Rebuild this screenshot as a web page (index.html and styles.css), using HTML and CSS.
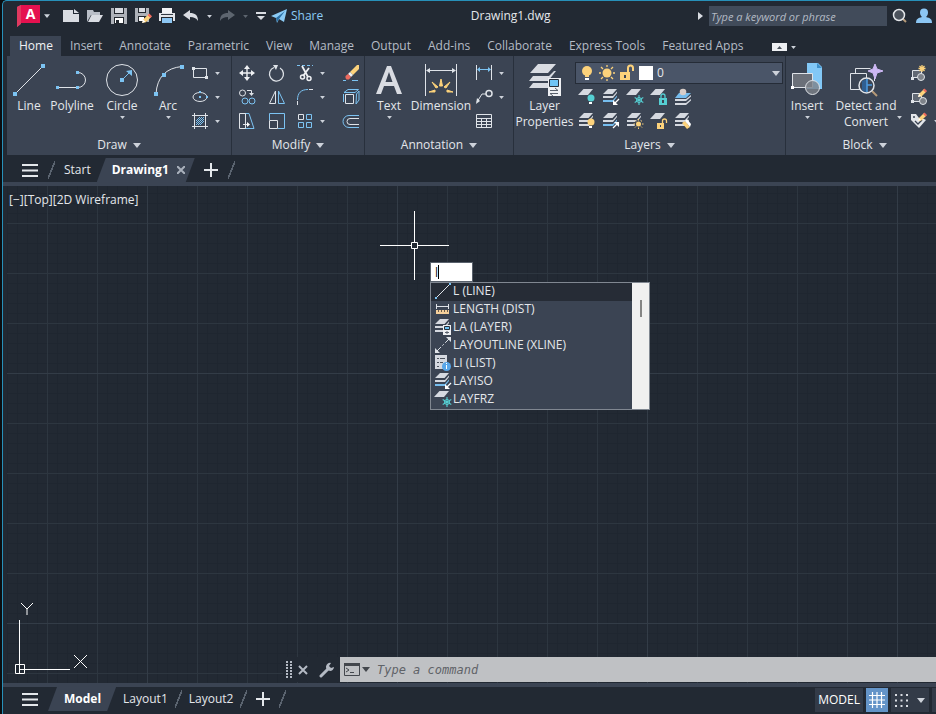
FILE: index.html
```html
<!DOCTYPE html>
<html lang="en">
<head>
    <meta charset="UTF-8">
    <meta name="viewport" content="width=device-width, initial-scale=1.0">
    <title>Drawing1.dwg</title>
    <link rel="stylesheet" href="styles.css">
</head>
<body>

    <!-- shared icon parts -->
    <svg class="sprite" aria-hidden="true">
        <symbol id="caret" viewBox="0 0 8 5"><path d="M0 0h8L4 5z" fill="currentColor"/></symbol>
        <symbol id="sheet" viewBox="0 0 18 18"><path d="M5.500 1H15l-5 6H0z" fill="#d5d9e0"/></symbol>
        <symbol id="stack" viewBox="0 0 18 18">
            <path d="M6 1h9l-4.500 5H1zM1 8h10l4-4.500V5l-4 5H1zM1 12h10l4-4.500V9l-4 5H1z" fill="#d5d9e0"/>
        </symbol>
        <symbol id="stack-blue" viewBox="0 0 18 18">
            <path d="M6 1h9l-4.500 5H1zM1 8h10l4-4.500V5l-4 5H1z" fill="#d5d9e0"/>
            <path d="M1 12h10l4-4.500V9l-4 5H1z" fill="#76bdee"/>
        </symbol>
        <symbol id="pencil" viewBox="0 0 10 10">
            <path d="M1 9l1-3 5-5 2.500 2.500-5 5z" fill="#fcd27b"/>
            <path d="M6 2l1.500-1.500L10 3 8.500 4.500z" fill="#ed6a5e"/>
            <path d="M1 9l1-3 2 2z" fill="#fff"/>
        </symbol>
        <symbol id="snow" viewBox="0 0 10 10">
            <path d="M5 0v10M.7 2.500l8.600 5M9.300 2.500l-8.600 5" stroke="#55cfd3" stroke-width="1.100"/>
            <path d="M5 2.200l2.500 1.400v2.800L5 7.800 2.500 6.400V3.600z" fill="none" stroke="#55cfd3" stroke-width=".9"/>
        </symbol>
        <symbol id="plus" viewBox="0 0 14 14"><path d="M7 0v14M0 7h14" stroke="currentColor" stroke-width="2"/></symbol>
        <symbol id="menu" viewBox="0 0 16 13"><path d="M0 1h16M0 6.500h16M0 12h16" stroke="currentColor" stroke-width="2"/></symbol>
    </svg>

    <div class="window">

        <header class="titlebar">
            <button class="app-button" aria-label="Application menu">
                <svg width="23" height="23" viewBox="0 0 23 23"><path d="M0 2l4-2v19l-4 3z" fill="#c95070"/><path d="M0 2l4-2h18v18H4l-4 4z" fill="#e0385f"/><path d="M4 0h19v18H4z" fill="#e5114f"/><text x="13.500" y="14" text-anchor="middle" class="logo-letter">A</text></svg>
                <svg class="caret"><use href="#caret"/></svg>
            </button>
            <nav class="quick">
                <button aria-label="New"><svg width="18" height="18" viewBox="0 0 18 18"><path d="M1 3h10v4h6v8H1z" fill="#d9dce2"/><path d="M12 2l5 4h-5z" fill="#d9dce2"/></svg></button>
                <button aria-label="Open"><svg width="18" height="18" viewBox="0 0 18 18"><path d="M1 15V3h6l1 2h6v3H5z" fill="#b9bec7"/><path d="M5.500 8H17l-4 7H2z" fill="#d9dce2"/></svg></button>
                <button aria-label="Save"><svg width="18" height="18" viewBox="0 0 18 18"><path d="M1 1h16v16H1z" fill="#aeb2b9"/><path d="M4 1h10v6H4z" fill="#23282f"/><path d="M5 1h8v5H5z" fill="#d9dce2"/><path d="M4 10h10v7H4z" fill="#23282f"/><path d="M5 11h8v5H5z" fill="#fff"/><path d="M6 13h3v3H6z" fill="#23282f"/></svg></button>
                <button aria-label="Save As"><svg width="18" height="18" viewBox="0 0 18 18"><path d="M1 1h14v14H1z" fill="#aeb2b9"/><path d="M4 1h8v5H4z" fill="#23282f"/><path d="M5 1h6v4H5z" fill="#d9dce2"/><path d="M4 9h9v6H4z" fill="#23282f"/><path d="M5 10h5v4H5z" fill="#fff"/><use href="#pencil" x="7" y="6" width="11" height="11"/></svg></button>
                <button aria-label="Plot"><svg width="18" height="18" viewBox="0 0 18 18"><path d="M4 1h10v5H4z" fill="#f2f3f5"/><path d="M1 6h16v8H1z" fill="#e3e5e9"/><path d="M3 7h12v1H3z" fill="#333a44"/><path d="M3 10h12v7H3z" fill="#23282f"/><path d="M4 11h10v5H4z" fill="#8cc6f3"/></svg></button>
                <button aria-label="Undo"><svg width="18" height="18" viewBox="0 0 18 18"><path d="M1 8l7-5v3c5 0 8 2 8 8-2-3-4-4-8-4v3z" fill="#d9dce2"/></svg></button>
                <button class="narrow" aria-label="Undo list"><svg class="caret small"><use href="#caret"/></svg></button>
                <button class="off" aria-label="Redo"><svg width="18" height="18" viewBox="0 0 18 18"><path d="M17 8l-7-5v3c-5 0-8 2-8 8 2-3 4-4 8-4v3z" fill="#5d656f"/></svg></button>
                <button class="narrow off" aria-label="Redo list"><svg class="caret small"><use href="#caret"/></svg></button>
                <button class="customize" aria-label="Customize toolbar"><svg width="10" height="8" viewBox="0 0 10 8"><path d="M0 0h10v2H0zM1 4h8L5 8z" fill="#d9dce2"/></svg></button>
            </nav>
            <button class="share"><svg width="16" height="16" viewBox="0 0 16 16"><path d="M0 8L16 1l-3 13-5-3-2 4-1-5z" fill="#8bcbf5"/><path d="M5 10l9-7-6 8-2 3z" fill="#2a6fa5"/></svg>Share</button>
            <div class="doc-title">Drawing1.dwg</div>
            <svg class="play" width="5" height="8" viewBox="0 0 5 8"><path d="M0 0l5 4-5 4z" fill="#d9dce2"/></svg>
            <input class="search" type="text" placeholder="Type a keyword or phrase" aria-label="Search">
            <button class="round" aria-label="Search"><svg width="16" height="16" viewBox="0 0 16 16"><path d="M10 10l4 4" stroke="#b69a78" stroke-width="2"/><circle cx="7" cy="7" r="5.500" fill="#4b525c" stroke="#e3e6ea" stroke-width="1.500"/></svg></button>
            <button class="round" aria-label="Sign in"><svg width="16" height="16" viewBox="0 0 16 16"><path d="M4 4.500a4 4 0 0 1 8 0C12 7 11 8 10 9c4 1 6 2 6 6H0c0-4 2-5 6-6-1-1-2-2-2-4.500z" fill="#8cc6f3"/></svg></button>
        </header>

        <nav class="tabs">
            <button class="active">Home</button>
            <button>Insert</button>
            <button>Annotate</button>
            <button>Parametric</button>
            <button>View</button>
            <button>Manage</button>
            <button>Output</button>
            <button>Add-ins</button>
            <button>Collaborate</button>
            <button>Express Tools</button>
            <button>Featured Apps</button>
            <button class="minimize" aria-label="Minimize ribbon"><svg width="15" height="8" viewBox="0 0 15 8"><path d="M0 0h15v8H0z" fill="#eef0f3"/><path d="M5 6l2.500-3L10 6z" fill="#4b525c"/></svg><svg class="caret small"><use href="#caret"/></svg></button>
        </nav>

        <div class="ribbon">

            <section class="panel draw">
                <div class="tools">
                    <button class="big"><svg width="32" height="34" viewBox="0 0 32 34"><path d="M2 31L30 3" stroke="#dfe3e8"/><path d="M0 29h4v4H0zM28 1h4v4h-4z" fill="#7cc3f2"/></svg>Line</button>
                    <button class="big"><svg width="34" height="34" viewBox="0 0 34 34"><path d="M3 24.500h20a7.500 7.500 0 0 0 0-15" fill="none" stroke="#dfe3e8"/><path d="M1 23h3v3H1zM21 23h3v3h-3zM21 8h3v3h-3z" fill="#7cc3f2"/></svg>Polyline</button>
                    <button class="big"><svg width="34" height="34" viewBox="0 0 34 34"><circle cx="17" cy="17" r="15.500" fill="none" stroke="#dfe3e8"/><path d="M17 17l8-8" stroke="#7cc3f2"/><path d="M15 15h4v4h-4zM27 7v6l-6-5z" fill="#7cc3f2"/></svg>Circle<svg class="caret small"><use href="#caret"/></svg></button>
                    <button class="big"><svg width="34" height="34" viewBox="0 0 34 34"><path d="M5 31C6 14 15 5 31 3.500" fill="none" stroke="#dfe3e8"/><path d="M3 29h4v4H3zM11 10h4v4h-4zM29 2h4v4h-4z" fill="#7cc3f2"/></svg>Arc<svg class="caret small"><use href="#caret"/></svg></button>
                    <div class="column">
                        <button class="mini" aria-label="Rectangle"><svg class="icon" viewBox="0 0 18 18"><path d="M2.500 4.500h13v9h-13z" fill="none" stroke="#dfe3e8"/><path d="M1 3h3v3H1zM14 12h3v3h-3z" fill="#dfe3e8"/></svg><svg class="caret small"><use href="#caret"/></svg></button>
                        <button class="mini" aria-label="Ellipse"><svg class="icon" viewBox="0 0 18 18"><ellipse cx="9" cy="9" rx="7" ry="4.500" fill="none" stroke="#dfe3e8"/><path d="M8 8h2v2H8zM15 8h2v2h-2zM8 3h2v2H8z" fill="#7cc3f2"/></svg><svg class="caret small"><use href="#caret"/></svg></button>
                        <button class="mini" aria-label="Hatch"><svg class="icon" viewBox="0 0 18 18"><path d="M5 9l4-4M5 13l8-8M9 13l4-4M5 11l6-6M7 13l6-6" stroke="#7cc3f2"/><path d="M1 3.500h16M1 14.500h16M3.500 1v16M14.500 1v16" stroke="#dfe3e8"/></svg><svg class="caret small"><use href="#caret"/></svg></button>
                    </div>
                </div>
                <button class="panel-title">Draw<svg class="caret"><use href="#caret"/></svg></button>
            </section>

            <section class="panel modify">
                <div class="tools">
                    <div class="column">
                        <button class="mini" aria-label="Move"><svg class="icon" viewBox="0 0 18 18"><path d="M9 3v12M3 9h12" stroke="#eef0f3" stroke-width="1.400"/><path d="M9 1l3 4H6zM9 17l3-4H6zM1 9l4-3v6zM17 9l-4-3v6z" fill="#eef0f3"/></svg></button>
                        <button class="mini" aria-label="Copy"><svg class="icon" viewBox="0 0 18 18"><g fill="none"><circle cx="4.500" cy="5" r="3" stroke="#dfe3e8"/><circle cx="7" cy="13" r="3" stroke="#7cc3f2"/><circle cx="14" cy="13" r="3" stroke="#7cc3f2"/><path d="M9 2.500h4.500v4" stroke="#dfe3e8"/></g><path d="M11 5h5l-2.500 3z" fill="#dfe3e8"/></svg></button>
                        <button class="mini" aria-label="Stretch"><svg class="icon" viewBox="0 0 18 18"><path d="M7 1.500h4l5 15H7" fill="none" stroke="#7cc3f2"/><path d="M1.500 1.500h6v15h-6zM5 12.500h5" fill="none" stroke="#dfe3e8"/><path d="M9 10l3 2.500L9 15z" fill="#fff"/></svg></button>
                    </div>
                    <div class="column">
                        <button class="mini" aria-label="Rotate"><svg class="icon" viewBox="0 0 18 18"><path d="M12 4a7 7 0 1 1-6-.5" fill="none" stroke="#dfe3e8" stroke-width="1.300"/><path d="M5 1h5L8 6z" fill="#dfe3e8"/></svg></button>
                        <button class="mini" aria-label="Mirror"><svg class="icon" viewBox="0 0 18 18"><path d="M7.500 3v12.500H1.500z" fill="none" stroke="#dfe3e8"/><path d="M10.500 3v12.500h6z" fill="none" stroke="#7cc3f2"/></svg></button>
                        <button class="mini" aria-label="Scale"><svg class="icon" viewBox="0 0 18 18"><path d="M1.500 8V1.500h15v15H10" fill="none" stroke="#7cc3f2"/><path d="M1.500 8.500h8v8h-8z" fill="none" stroke="#dfe3e8"/></svg></button>
                    </div>
                    <div class="column">
                        <button class="mini" aria-label="Trim"><svg class="icon" viewBox="0 0 18 18"><path d="M1 1.500h16" stroke="#7cc3f2" stroke-dasharray="3 2"/><path d="M6 2l6 11M13 4L7 12" stroke="#eef0f3" stroke-width="1.800"/><g fill="none" stroke="#eef0f3" stroke-width="1.500"><circle cx="6.500" cy="13" r="2"/><circle cx="13" cy="14.500" r="2"/></g></svg><svg class="caret small"><use href="#caret"/></svg></button>
                        <button class="mini" aria-label="Fillet"><svg class="icon" viewBox="0 0 18 18"><path d="M1.500 17v-4M13 1.500h4" stroke="#dfe3e8"/><path d="M1.500 12C1.500 5 5 1.500 12 1.500" fill="none" stroke="#7cc3f2"/></svg><svg class="caret small"><use href="#caret"/></svg></button>
                        <button class="mini" aria-label="Array"><svg class="icon" viewBox="0 0 18 18"><g fill="none" stroke="#7cc3f2"><path d="M10.500 2.500h5v5h-5zM2.500 10.500h5v5h-5zM10.500 10.500h5v5h-5z"/><path d="M2.500 2.500h5v5h-5z" stroke="#dfe3e8"/></g></svg><svg class="caret small"><use href="#caret"/></svg></button>
                    </div>
                    <div class="column">
                        <button class="mini" aria-label="Erase"><svg class="icon" viewBox="0 0 18 18"><path d="M8 8l7-7h2v4l-6 6z" fill="#fcd27b"/><path d="M6 10l2-2 3 3-2 2z" fill="#eef0f3"/><path d="M6 10l3 3-2 2.500H4.500L3.500 14v-2z" fill="#ed6a5e"/><path d="M1 16.500h3M10 16.500h6" stroke="#7cc3f2"/></svg></button>
                        <button class="mini" aria-label="Explode"><svg class="icon" viewBox="0 0 18 18"><g fill="none"><path d="M3.500 6.500h8v9h-8z" stroke="#dfe3e8"/><path d="M2 4.500L6 1.500h10.500L13 4.500zM14.500 6L17 3v9l-3 4zM1.500 6v8" stroke="#7cc3f2"/></g></svg></button>
                        <button class="mini" aria-label="Offset"><svg class="icon" viewBox="0 0 18 18"><g fill="none"><path d="M17 3.500H7a6 6 0 0 0 0 12h10" stroke="#7cc3f2"/><path d="M17 6.500H8a3 3 0 0 0 0 6h9" stroke="#dfe3e8"/></g></svg></button>
                    </div>
                </div>
                <button class="panel-title">Modify<svg class="caret"><use href="#caret"/></svg></button>
            </section>

            <section class="panel annotation">
                <div class="tools">
                    <button class="big"><svg width="34" height="34" viewBox="0 0 34 34"><path d="M4 31L15 3h4l11 28h-5l-3-8H12l-3 8zM13.500 19h7L17 9z" fill="#d9dce2" fill-rule="evenodd"/></svg>Text<svg class="caret small"><use href="#caret"/></svg></button>
                    <button class="big"><svg width="34" height="34" viewBox="0 0 34 34"><path d="M1.500 1v32M32.500 1v32M3 7.500h28" stroke="#dfe3e8"/><path d="M2 7.500L6 5v5zM32 7.500L28 5v5z" fill="#dfe3e8"/><path d="M5 29l6-2v2zM29 29l-6-2v2zM8 19l6 5-2 1zM26 19l-6 5 2 1zM17 16l1.500 7h-3z" fill="#fcd27b" stroke="#fcd27b"/></svg>Dimension</button>
                    <div class="column">
                        <button class="mini" aria-label="Linear"><svg class="icon" viewBox="0 0 18 18"><path d="M4 5.500h10" stroke="#7cc3f2"/><path d="M2 5.500L5 3v5zM16 5.500L13 3v5z" fill="#7cc3f2"/><path d="M1.500 1v15M16.500 1v15" stroke="#dfe3e8"/></svg><svg class="caret small"><use href="#caret"/></svg></button>
                        <button class="mini" aria-label="Leader"><svg class="icon" viewBox="0 0 18 18"><path d="M2 14l5-8h4" fill="none" stroke="#dfe3e8"/><circle cx="14" cy="5.500" r="3" fill="none" stroke="#dfe3e8" stroke-width="1.500"/><path d="M1 16l1-6 3 3z" fill="#dfe3e8"/></svg><svg class="caret small"><use href="#caret"/></svg></button>
                        <button class="mini" aria-label="Table"><svg class="icon" viewBox="0 0 18 18"><path d="M1.500 2.500h15v13h-15zM1.500 6.500h15M1.500 9.500h15M1.500 12.500h15M6.500 6v9M11.500 6v9" fill="none" stroke="#dfe3e8"/></svg></button>
                    </div>
                </div>
                <button class="panel-title">Annotation<svg class="caret"><use href="#caret"/></svg></button>
            </section>

            <section class="panel layers">
                <div class="tools">
                    <button class="big"><svg width="34" height="34" viewBox="0 0 34 34"><path d="M10 1h18l-8 9H2zM5 13h16l5-5h2l-8 10H1zM5 20h15v5H1z" fill="#d9dce2"/><path d="M20 15h13v18H20z" fill="#eef0f3"/><path d="M21.500 16.500h9v7h-9z" fill="#6fc4f5" stroke="#28303b"/><path d="M22 27.500h8M22 30.500h8M27 25l3 2.500M25 33l-3-2.500" stroke="#59616c" fill="none"/></svg>Layer<br>Properties</button>
                    <div class="layer-tools">
                        <div class="layer-picker">
                            <svg class="icon" viewBox="0 0 18 18"><circle cx="9" cy="7" r="5" fill="#fcd27b"/><path d="M7 11h4v2H7z" fill="#fcd27b"/><path d="M7 14h4v2H7z" fill="#fff"/></svg>
                            <svg class="icon" viewBox="0 0 18 18"><circle cx="9" cy="9" r="4.500" fill="#fcd27b"/><path d="M9 1v2M9 15v2M1 9h2M15 9h2M3 3l2 2M13 13l2 2M3 15l2-2M13 5l2-2" stroke="#fcd27b" stroke-width="1.300"/></svg>
                            <svg class="icon" viewBox="0 0 18 18"><path d="M2 8h10v8H2z" fill="#fcd27b"/><path d="M10 8V4a2.500 2.500 0 0 1 5 0v3" fill="none" stroke="#fcd27b" stroke-width="2"/><path d="M6 11h2v3H6z" fill="#3b4453"/></svg>
                            <span class="swatch"></span>
                            <select aria-label="Layer"><option>0</option></select>
                            <svg class="caret"><use href="#caret"/></svg>
                        </div>
                        <div class="row">
                            <button class="mini" aria-label="Off"><svg class="icon" viewBox="0 0 18 18"><use href="#sheet"/><circle cx="13" cy="10" r="3.500" fill="#55cfd3"/><path d="M11 14h3v2h-3z" fill="#fff"/></svg></button>
                            <button class="mini" aria-label="Isolate"><svg class="icon" viewBox="0 0 18 18"><use href="#stack-blue"/><path d="M17 11l-4 4" stroke="#fff" stroke-width="1.300"/><path d="M11 12v5h5z" fill="#fff"/></svg></button>
                            <button class="mini" aria-label="Freeze"><svg class="icon" viewBox="0 0 18 18"><use href="#sheet"/><use href="#snow" x="8" y="7" width="10" height="10"/></svg></button>
                            <button class="mini" aria-label="Lock"><svg class="icon" viewBox="0 0 18 18"><use href="#sheet"/><path d="M9 10h8v7H9z" fill="#55cfd3"/><path d="M11 10V8a2 2 0 0 1 4 0v2" fill="none" stroke="#55cfd3" stroke-width="1.300"/><path d="M12 12h2v3h-2z" fill="#3b4453"/></svg></button>
                            <button class="mini" aria-label="Make Current"><svg class="icon" viewBox="0 0 18 18"><path d="M5 5h12l-5 5H1z" fill="#76bdee"/><path d="M1 11h11l5-4v1.500L12 13H1zM1 15h11l5-4v1.500L12 17H1z" fill="#d5d9e0"/><circle cx="9" cy="4" r="3.300" fill="#d8cdc8"/></svg></button>
                        </div>
                        <div class="row">
                            <button class="mini" aria-label="Turn All On"><svg class="icon" viewBox="0 0 18 18"><use href="#stack"/><circle cx="13" cy="10" r="3.500" fill="#fcd27b"/><path d="M11 14h3v2h-3z" fill="#fff"/></svg></button>
                            <button class="mini" aria-label="Unisolate"><svg class="icon" viewBox="0 0 18 18"><use href="#stack-blue"/><path d="M11 16l4-4" stroke="#fff" stroke-width="1.300"/><path d="M12 10h5v5z" fill="#fff"/></svg></button>
                            <button class="mini" aria-label="Thaw All"><svg class="icon" viewBox="0 0 18 18"><use href="#stack"/><circle cx="12.500" cy="12" r="4" fill="#3b4453"/><circle cx="12.500" cy="12" r="2.500" fill="#fcd27b"/><path d="M12.500 7v10M7.500 12h10M9 8.500l7 7M9 15.500l7-7" stroke="#fcd27b" stroke-dasharray="1.500 7 1.500"/></svg></button>
                            <button class="mini" aria-label="Unlock"><svg class="icon" viewBox="0 0 18 18"><use href="#sheet"/><path d="M7 11h7v6H7z" fill="#fcd27b"/><path d="M12.500 11V9a1.800 1.800 0 0 1 4 0v2" fill="none" stroke="#fcd27b" stroke-width="1.300"/><path d="M10 13h1v2h-1z" fill="#3b4453"/></svg></button>
                            <button class="mini" aria-label="Match Layer"><svg class="icon" viewBox="0 0 18 18"><use href="#stack"/><path d="M8 11l3-2 5 6-3 2z" fill="#fcd27b"/><path d="M11 9l2-2 4 5-1 3z" fill="#fff"/></svg></button>
                        </div>
                    </div>
                </div>
                <button class="panel-title">Layers<svg class="caret"><use href="#caret"/></svg></button>
            </section>

            <section class="panel block">
                <div class="tools">
                    <button class="big"><svg width="34" height="34" viewBox="0 0 34 34"><path d="M17 0h11l4 4v22H17z" fill="#82c8f6"/><path d="M27 0l5 5h-5z" fill="#3e90ca"/><path d="M2.500 10.500h20v14h-20z" fill="#6b7079" stroke="#dfe3e8"/><circle cx="22.500" cy="24.500" r="7" fill="#7d8289" fill-opacity=".8" stroke="#dfe3e8"/><path d="M1 23h3v3H1z" fill="#fff"/></svg>Insert<svg class="caret small"><use href="#caret"/></svg></button>
                    <button class="big detect"><svg width="34" height="34" viewBox="0 0 34 34"><path d="M6.500 10V5.500h15M25.500 14v4M1.500 10.500h16v16h-16z" fill="none" stroke="#dfe3e8"/><path d="M23 28l5 5" stroke="#b69a78" stroke-width="2"/><circle cx="17.500" cy="22.500" r="7.500" fill="#3b4453" stroke="#dfe3e8" stroke-width="1.500"/><path d="M18 16v13a6.500 6.500 0 0 1-5-2v-9z" fill="#2f5f92"/><path d="M18 16v13M18 22h5" fill="none" stroke="#4d9be0" stroke-width="1.500"/><path d="M26 1l2 5 6 2-6 2-2 6-2-6-5-2 5-2z" fill="#cdb8f4" stroke="#cdb8f4"/></svg>Detect and<br>Convert<svg class="caret small"><use href="#caret"/></svg></button>
                    <div class="column">
                        <button class="mini" aria-label="Create Block"><svg class="icon" viewBox="0 0 18 18"><path d="M2.500 6.500h9v7h-9z" fill="#626974" stroke="#dfe3e8"/><circle cx="11" cy="13" r="3.500" fill="#7d8289" stroke="#dfe3e8"/><path d="M1 13h3v3H1z" fill="#dfe3e8"/><path d="M12 1v7M8.500 4.500h7M9.500 2l5 5M14.500 2l-5 5" stroke="#fcd27b" stroke-width="1.300"/></svg></button>
                        <button class="mini" aria-label="Edit Block"><svg class="icon" viewBox="0 0 18 18"><path d="M2.500 5.500h9v8h-9z" fill="#626974" stroke="#dfe3e8"/><circle cx="13" cy="13" r="3.500" fill="#7d8289" stroke="#dfe3e8"/><path d="M1 12h3v3H1z" fill="#dfe3e8"/><use href="#pencil" x="7" y="0" width="10" height="10"/></svg></button>
                        <button class="mini" aria-label="Edit Attributes"><svg class="icon" viewBox="0 0 18 18"><path d="M1 2h5l3 4 5 1 2 1-7 8-8-8z" fill="#e3e6ea"/><path d="M5 9l3 3 4-4" stroke="#3b4453" fill="none" stroke-width="1.300"/><circle cx="4" cy="5" r="1" fill="#3b4453"/><use href="#pencil" x="7" y="0" width="10" height="10"/></svg><svg class="caret small"><use href="#caret"/></svg></button>
                    </div>
                </div>
                <button class="panel-title">Block<svg class="caret"><use href="#caret"/></svg></button>
            </section>
        </div>

        <nav class="file-tabs">
            <button class="menu" aria-label="Menu"><svg width="16" height="13"><use href="#menu"/></svg></button>
            <span class="slash"></span>
            <button class="start">Start</button>
            <button class="current">Drawing1<svg width="8" height="8" viewBox="0 0 8 8"><path d="M0 0l8 8M8 0L0 8" stroke="#aab1bc" stroke-width="2"/></svg></button>
            <button class="add" aria-label="New drawing"><svg width="14" height="14"><use href="#plus"/></svg></button>
            <span class="slash"></span>
        </nav>

        <main class="canvas">
            <div class="view-controls">[−][Top][2D Wireframe]</div>

            <svg class="crosshair" width="69" height="69" viewBox="0 0 69 69"><path d="M34.500 0v31M34.500 38v31M0 34.500h31M38 34.500h31M31.500 31.500h6v6h-6z" fill="none" stroke="#fff"/></svg>

            <div class="dynamic-input">
                <div class="entry"><input type="text" value="l" aria-label="Command"></div>
                <div class="suggest">
                    <ul>
                        <li class="selected"><button><svg class="icon" viewBox="0 0 18 18"><path d="M2 16L16 2" stroke="#dfe3e8"/><path d="M1 15h2v2H1zM15 1h2v2h-2z" fill="#7cc3f2"/></svg>L (LINE)</button></li>
                        <li><button><svg class="icon" viewBox="0 0 18 18"><path d="M2.500 4v5M14.500 4v5M3 6.500h12" stroke="#dfe3e8"/><path d="M2 10h13v4H2z" fill="#f4cf9b"/><path d="M4.500 10v2M7.500 10v2M10.500 10v2M13.500 10v2" stroke="#6b5d4c"/></svg>LENGTH (DIST)</button></li>
                        <li><button><svg class="icon" viewBox="0 0 18 18"><use href="#stack"/><path d="M9 7h8v10H9z" fill="#eef0f3"/><path d="M10.500 8.500h5v3h-5z" fill="#6fc4f5" stroke="#28303b"/><path d="M11 14.500h4M13 13v3" stroke="#59616c"/></svg>LA (LAYER)</button></li>
                        <li><button><svg class="icon" viewBox="0 0 18 18"><path d="M2 16L16 2" stroke="#dfe3e8" stroke-dasharray="7 2 2 2"/><path d="M1 17v-5l5 5zM17 1v5l-5-5z" fill="#dfe3e8"/></svg>LAYOUTLINE (XLINE)</button></li>
                        <li><button><svg class="icon" viewBox="0 0 18 18"><path d="M1 1h12v14H1z" fill="#d5d9e0"/><path d="M3 4.500h2M6 4.500h5M3 8.500h2M6 8.500h3M3 12.500h2" stroke="#4b525c"/><circle cx="12.500" cy="12.500" r="4.500" fill="#58a6e8"/><path d="M12.500 11v4M12.500 9v1" stroke="#fff"/></svg>LI (LIST)</button></li>
                        <li><button><svg class="icon" viewBox="0 0 18 18"><use href="#stack-blue"/><path d="M17 11l-4 4" stroke="#fff" stroke-width="1.300"/><path d="M11 12v5h5z" fill="#fff"/></svg>LAYISO</button></li>
                        <li><button><svg class="icon" viewBox="0 0 18 18"><use href="#sheet"/><use href="#snow" x="8" y="7" width="10" height="10"/></svg>LAYFRZ</button></li>
                    </ul>
                    <div class="scrollbar"><span></span></div>
                </div>
            </div>

            <svg class="ucs" width="78" height="74" viewBox="0 0 78 74"><path d="M9.500 18v53M5.500 62.500h9v9h-9zM9.500 67.500H60M11 1l6 6 6-6M17 7v6M64 53l13 13M77 53L64 66" fill="none" stroke="#fff"/></svg>

            <div class="command-line">
                <svg class="grip" width="6" height="18" viewBox="0 0 6 18"><path d="M1 0v18M5 0v18" stroke="#b4bac4" stroke-width="2" stroke-dasharray="2 1"/></svg>
                <button class="close" aria-label="Close"><svg width="10" height="10" viewBox="0 0 10 10"><path d="M1 1l8 8M9 1L1 9" stroke="#b4bac4" stroke-width="2"/></svg></button>
                <button class="wrench" aria-label="Customize"><svg width="16" height="16" viewBox="0 0 16 16"><path d="M2 14l7-7" stroke="#b4bac4" stroke-width="3" stroke-linecap="round"/><path d="M12 1a4 4 0 1 0 3 4l-3 1-2-2z" fill="#b4bac4"/></svg></button>
                <label class="prompt">
                    <svg width="16" height="13" viewBox="0 0 16 13"><path d="M.5.500h15v12H.5z" fill="none" stroke="#43474d"/><path d="M0 0h16v3H0z" fill="#43474d"/><path d="M2 5l3 2-3 2M6 9.500h4" fill="none" stroke="#43474d"/></svg>
                    <svg class="caret"><use href="#caret"/></svg>
                    <input type="text" placeholder="Type a command" aria-label="Command line">
                </label>
            </div>
        </main>

        <footer class="status">
            <button class="menu" aria-label="Menu"><svg width="16" height="13"><use href="#menu"/></svg></button>
            <button class="model-tab">Model</button>
            <button class="layout">Layout1</button>
            <span class="slash"></span>
            <button class="layout">Layout2</button>
            <span class="slash"></span>
            <button class="add" aria-label="New layout"><svg width="14" height="14"><use href="#plus"/></svg></button>
            <span class="slash"></span>
            <div class="toggles">
                <button class="space">MODEL</button>
                <button class="grid-on" aria-label="Grid"><svg width="16" height="16" viewBox="0 0 16 16"><path d="M3.500 0v16M8 0v16M12.500 0v16M0 3.500h16M0 8h16M0 12.500h16" stroke="#fff" stroke-width="1.200"/></svg></button>
                <button class="snap" aria-label="Snap"><svg width="13" height="13" viewBox="0 0 13 13"><path d="M0 1h13M0 6.500h13M0 12h13" stroke="#d9dce2" stroke-width="2" stroke-dasharray="2 3.500"/></svg><svg class="caret"><use href="#caret"/></svg></button>
                <span class="more"></span>
            </div>
        </footer>
    </div>

</body>
</html>
```

FILE: styles.css
```css
* {
    box-sizing: border-box;
}
body {
    margin: 0;
    background: #0b0d10;
    color: #e4e7eb;
    font-family: "Open Sans", "Noto Sans", sans-serif;
    font-size: 12px;
    line-height: 16px;
    overflow: hidden;
}
button {
    margin: 0;
    padding: 0;
    border: none;
    background: none;
    color: inherit;
    font: inherit;
    white-space: nowrap;
    cursor: pointer;
}
svg {
    display: block;
    flex: none;
}
.sprite {
    position: absolute;
    width: 0;
    height: 0;
}
.icon {
    width: 18px;
    height: 18px;
}
.caret {
    width: 8px;
    height: 5px;
    color: #cdd2da;
}
.caret.small {
    width: 5px;
    height: 3px;
}
.window {
    display: flex;
    flex-direction: column;
    height: 100vh;
    margin-left: 2px;
    border-top: 1px solid #2790b9;
    border-left: 1px solid #2790b9;
    border-top-left-radius: 5px;
    background: #222933;
}

/* title bar */
.titlebar {
    display: flex;
    align-items: center;
    height: 30px;
    padding: 0 4px 0 14px;
}
.app-button {
    display: flex;
    align-items: center;
    gap: 4px;
    width: 42px;
}
.app-button .caret {
    width: 6px;
    height: 4px;
}
.logo-letter {
    fill: #fff;
    font-size: 14px;
    font-weight: bold;
}
.quick {
    display: flex;
}
.quick button {
    display: flex;
    align-items: center;
    justify-content: center;
    width: 24px;
    height: 24px;
}
.quick .narrow {
    width: 12px;
}
.quick .customize {
    width: 20px;
}
.quick .off .caret {
    color: #5d656f;
}
.share {
    display: flex;
    align-items: center;
    gap: 4px;
    color: #8bcbf5;
}
.doc-title {
    flex: 1;
    text-align: center;
}
.play {
    margin-right: 6px;
}
.search {
    width: 178px;
    height: 20px;
    padding: 0 2px;
    border: none;
    background: #414b5a;
    color: #dfe3e8;
    font: italic 11px "Open Sans", "Noto Sans", sans-serif;
}
.search::placeholder {
    color: #b3bac4;
    opacity: 1;
}
.round {
    margin-left: 5px;
}
.round + .round {
    margin-left: 8px;
}

/* ribbon tabs */
.tabs {
    display: flex;
    align-items: flex-end;
    height: 25px;
    padding-left: 7px;
    color: #b5bcc6;
}
.tabs button {
    height: 20px;
    padding: 0 8px 0 9px;
}
.tabs .active {
    background: #3b4453;
    color: #f0f2f4;
}
.tabs .minimize {
    display: flex;
    align-items: center;
    gap: 4px;
    padding: 2px 20px 0;
}

/* ribbon */
.ribbon {
    display: flex;
    height: 99px;
    margin-left: 4px;
    background: #3b4453;
    overflow: hidden;
}
.panel {
    display: flex;
    flex: none;
    flex-direction: column;
    justify-content: space-between;
    border-right: 1px solid #28303c;
}
.tools {
    display: grid;
    padding-top: 5px;
}
.draw .tools {
    grid-template-columns: 44px 42px 58px 34px 46px;
}
.modify .tools {
    grid-template-columns: 30px 28px 46px 28px;
}
.annotation .tools {
    grid-template-columns: 48px 56px 44px;
}
.layers .tools {
    grid-template-columns: 61px 210px;
}
.block .tools {
    grid-template-columns: 42px 76px 39px;
}
.big {
    display: flex;
    flex-direction: column;
    align-items: center;
    justify-self: center;
    height: 72px;
    padding-top: 2px;
}
.big .caret {
    margin-top: 2px;
}
.big > svg:first-child {
    margin-bottom: 1px;
}
.detect .caret {
    align-self: flex-end;
    margin-top: -14px;
    margin-right: -6px;
}
.column {
    display: grid;
    grid-template-rows: repeat(3, 24px);
    justify-items: start;
    padding-left: 6px;
}
.mini {
    display: flex;
    align-items: center;
    gap: 6px;
    height: 24px;
}
.row {
    display: flex;
    gap: 6px;
    padding-left: 3px;
}
.layer-picker {
    display: flex;
    align-items: center;
    gap: 2px;
    height: 22px;
    margin: 1px 2px 1px 0;
    padding: 0 2px;
    border: 1px solid #252c37;
    background: #4a5568;
}
.swatch {
    width: 14px;
    height: 14px;
    margin: 0 2px 0 1px;
    background: #fff;
}
.layer-picker select {
    flex: 1;
    padding: 0;
    border: none;
    background: none;
    color: inherit;
    font: inherit;
    appearance: none;
}
.panel-title {
    display: flex;
    align-items: center;
    justify-content: center;
    gap: 6px;
    height: 20px;
}

/* drawing tabs */
.file-tabs {
    display: flex;
    align-items: flex-end;
    height: 31px;
    padding-left: 19px;
    border-bottom: 4px solid #3b4453;
}
.file-tabs button,
.status button {
    display: flex;
    align-items: center;
    height: 24px;
}
.slash {
    width: 7px;
    height: 24px;
    background: linear-gradient(112deg, transparent 45%, #5b6470 45%, #5b6470 55%, transparent 55%);
}
.file-tabs .menu {
    margin-right: 10px;
}
.file-tabs .start {
    margin: 0 6px 0 9px;
}
.file-tabs .current {
    gap: 8px;
    padding: 0 10px 0 15px;
    background: #3b4453;
    clip-path: polygon(9px 0, 100% 0, calc(100% - 9px) 100%, 0 100%);
    color: #fff;
    font-weight: bold;
}
.file-tabs .add {
    margin: 0 10px 0 9px;
}

/* drawing area */
.canvas {
    position: relative;
    flex: 1;
    margin-left: 4px;
    background-color: #222933;
    background-image:
        linear-gradient(90deg, #333c47 1px, transparent 1px),
        linear-gradient(#333c47 1px, transparent 1px),
        linear-gradient(90deg, #2d3640 1px, transparent 1px),
        linear-gradient(#2d3640 1px, transparent 1px),
        linear-gradient(90deg, #1f2630 1px, transparent 1px),
        linear-gradient(#1f2630 1px, transparent 1px);
    background-size: 250px 250px, 250px 250px, 50px 50px, 50px 50px, 10px 10px, 10px 10px;
    background-position: 140px 187px, 140px 187px, 40px 37px, 40px 37px, 0 7px, 0 7px;
}
.view-controls {
    padding: 6px 2px;
}
.crosshair {
    position: absolute;
    left: 373px;
    top: 25px;
}
.dynamic-input {
    position: absolute;
    left: 423px;
    top: 76px;
    width: 220px;
}
.entry {
    position: relative;
    width: 43px;
    height: 20px;
    border: 1px solid #59616c;
    background: #fff;
}
.entry input {
    width: 100%;
    height: 18px;
    padding: 0 4px;
    border: none;
    background: none;
    color: #111;
    font: inherit;
    outline: none;
}
.entry::after {
    content: "";
    position: absolute;
    left: 7px;
    top: 2px;
    width: 1px;
    height: 14px;
    background: #000;
}
.suggest {
    display: flex;
    border: 1px solid #808791;
    background: #3b4453;
}
.suggest ul {
    flex: 1;
    margin: 0;
    padding: 0;
    list-style: none;
}
.suggest li button {
    display: flex;
    align-items: center;
    gap: 1px;
    width: 100%;
    height: 18px;
    padding-left: 3px;
    line-height: 14px;
    padding-bottom: 2px;
}
.suggest .selected {
    background: #262c36;
}
.scrollbar {
    width: 17px;
    padding: 17px 8px;
    background: #f0f0f0;
}
.scrollbar span {
    display: block;
    width: 2px;
    height: 17px;
    background: #858585;
}
.ucs {
    position: absolute;
    left: 3px;
    bottom: 7px;
}
.command-line {
    position: absolute;
    left: 276px;
    right: 0;
    bottom: 1px;
    display: flex;
    align-items: center;
    height: 25px;
    padding-left: 3px;
    background: #222933;
}
.command-line .close {
    margin-left: 6px;
}
.command-line .wrench {
    margin: 0 5px 0 11px;
}
.prompt {
    display: flex;
    flex: 1;
    align-items: center;
    gap: 2px;
    height: 100%;
    padding-left: 4px;
    background: #bfc1c4;
}
.prompt .caret {
    color: #43474d;
}
.prompt input {
    flex: 1;
    padding: 0 5px;
    border: none;
    background: none;
    font: italic 12px "DejaVu Sans Mono", "Liberation Mono", monospace;
}
.prompt input::placeholder {
    color: #5f6368;
    opacity: 1;
}

/* status bar */
.status {
    display: flex;
    align-items: flex-start;
    height: 31px;
    padding-left: 19px;
    border-top: 4px solid #3b4453;
}
.status .menu {
    margin-right: 10px;
}
.status .model-tab {
    padding: 0 15px 0 16px;
    background: #3b4453;
    clip-path: polygon(9px 0, 100% 0, calc(100% - 9px) 100%, 0 100%);
    color: #fff;
    font-weight: bold;
}
.status .layout {
    margin: 0 7px;
}
.status .add {
    margin: 0 9px;
}
.toggles {
    display: flex;
    gap: 3px;
    margin-left: auto;
    padding-top: 1px;
}
.toggles .space {
    padding: 0 3px;
    background: #333b48;
    color: #fff;
}
.toggles .grid-on {
    padding: 0 3px;
    background: #6494c8;
}
.toggles .snap {
    gap: 9px;
    padding: 0 4px;
    background: #333b48;
}
.more {
    width: 4px;
    height: 24px;
    background: #333b48;
}
```
